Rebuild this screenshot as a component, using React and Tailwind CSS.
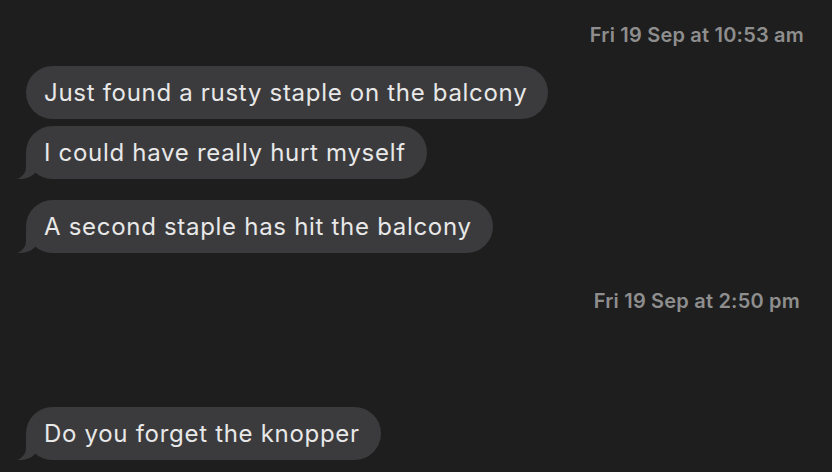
const FONT = { fontFamily: "Inter, 'Noto Sans', sans-serif" };

function Tail() {
  return (
    <svg
      className="absolute bottom-0 left-[-9px] h-[24px] w-[28px]"
      viewBox="0 0 28 24"
      fill="#3b3b3d"
    >
      <path d="M9 0 L9 12 C9 18 5 22 0 24 C7 24.5 13 22.5 17 19 L26 10 L26 0 Z" />
    </svg>
  );
}

function Bubble({ text, tail }) {
  return (
    <div className="relative self-start">
      {tail && <Tail />}
      <div className="relative rounded-[27px] bg-[#3b3b3d] py-[12px] pl-[18px] pr-[21px] text-[24px] leading-[29px] tracking-[0.7px] text-[#e8e8e8]">
        {text}
      </div>
    </div>
  );
}

function Stamp({ children, pr }) {
  return (
    <div
      className={`text-right text-[20px] font-semibold leading-[24px] tracking-[0.2px] text-[#8e8e8e] ${pr}`}
    >
      {children}
    </div>
  );
}

export default function App() {
  return (
    <div
      className="flex h-[472px] w-[832px] flex-col overflow-hidden bg-[#1e1e1e] pl-[26px] pt-[23px]"
      style={FONT}
    >
      <Stamp pr="pr-[28px]">Fri 19 Sep at 10:53 am</Stamp>
      <div className="mt-[19px] flex flex-col">
        <Bubble text="Just found a rusty staple on the balcony" />
        <div className="mt-[7px]" />
        <Bubble text="I could have really hurt myself" tail />
        <div className="mt-[21px]" />
        <Bubble text="A second staple has hit the balcony" tail />
      </div>
      <div className="mt-[36px]">
        <Stamp pr="pr-[32px]">Fri 19 Sep at 2:50 pm</Stamp>
      </div>
      <div className="mt-[94px] flex flex-col">
        <Bubble text="Do you forget the knopper" tail />
      </div>
    </div>
  );
}
